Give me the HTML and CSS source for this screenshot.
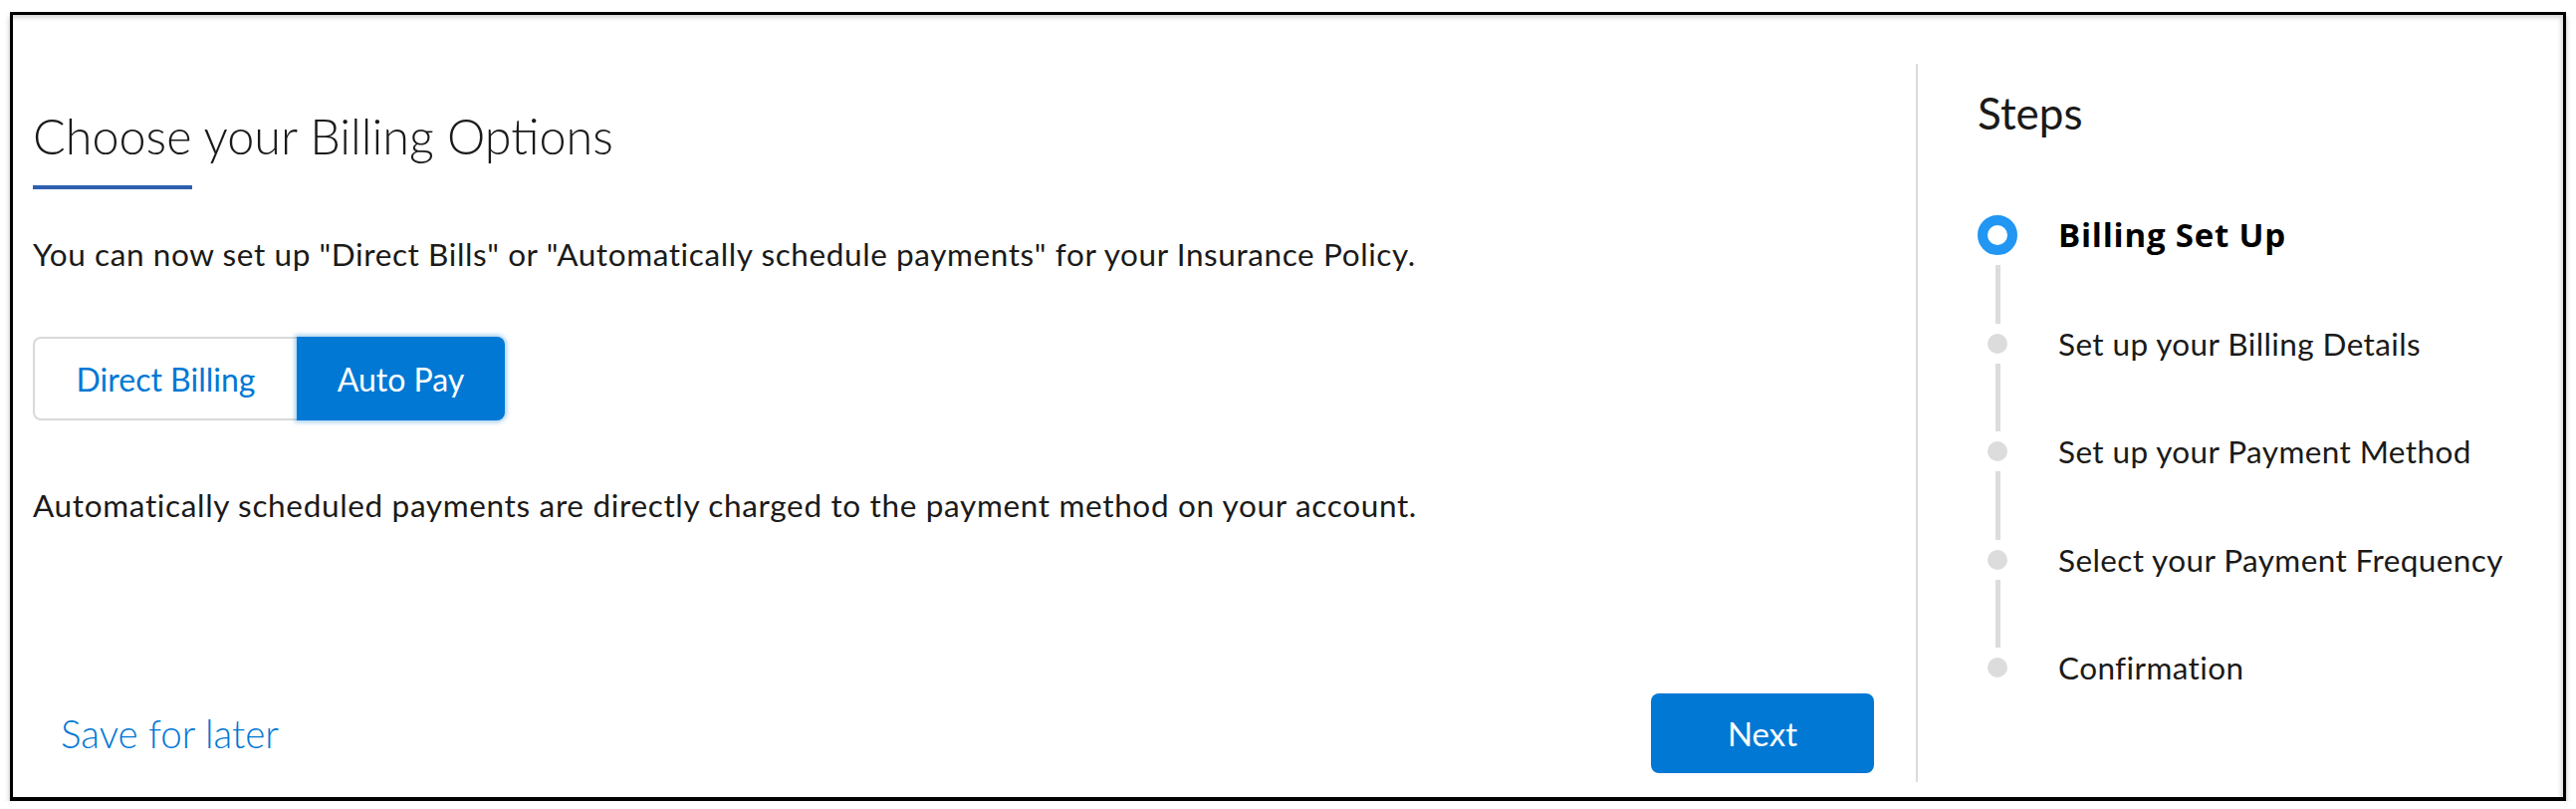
FILE: index.html
```html
<!DOCTYPE html>
<html lang="en">
<head>
<meta charset="utf-8">
<title>Billing Options</title>
<link rel="stylesheet" href="styles.css">
</head>
<body>
<div class="frame">
  <section class="main">
    <h1 class="title">Choose your Billing Options</h1>
    <div class="title-bar"></div>
    <p class="lead">You can now set up "Direct Bills" or "Automatically schedule payments" for your Insurance Policy.</p>
    <div class="toggle">
      <button class="toggle-btn direct">Direct Billing</button>
      <button class="toggle-btn auto">Auto Pay</button>
    </div>
    <p class="note">Automatically scheduled payments are directly charged to the payment method on your account.</p>
    <div class="footer">
      <a class="save" href="#">Save for later</a>
      <button class="next">Next</button>
    </div>
  </section>
  <div class="divider"></div>
  <aside class="aside">
    <h2 class="steps-title">Steps</h2>
    <div class="steps">
      <div class="step current">
        <span class="ind"><span class="ring"></span></span>
        <span class="label">Billing Set Up</span>
      </div>
      <div class="conn first"><span class="line"></span></div>
      <div class="step">
        <span class="ind"><span class="dot"></span></span>
        <span class="label">Set up your Billing Details</span>
      </div>
      <div class="conn"><span class="line"></span></div>
      <div class="step">
        <span class="ind"><span class="dot"></span></span>
        <span class="label">Set up your Payment Method</span>
      </div>
      <div class="conn"><span class="line"></span></div>
      <div class="step">
        <span class="ind"><span class="dot"></span></span>
        <span class="label">Select your Payment Frequency</span>
      </div>
      <div class="conn"><span class="line"></span></div>
      <div class="step">
        <span class="ind"><span class="dot"></span></span>
        <span class="label">Confirmation</span>
      </div>
    </div>
  </aside>
</div>
</body>
</html>
```

FILE: styles.css
```css
* { box-sizing: border-box; }
html, body { margin: 0; padding: 0; background: #fff; }
body {
  font-family: "Lato", "Open Sans", sans-serif;
  color: #1b1a19;
  padding: 12px 0 0 10px;
}
.frame {
  width: 2567px;
  height: 792px;
  border: 3px solid #000;
  border-bottom-width: 4px;
  background: #fff;
  display: flex;
  box-shadow: 0 4px 5px rgba(0,0,0,0.28), inset -3px 4px 4px -1px rgba(0,0,0,0.16);
}
.main {
  width: 1911px;
  display: flex;
  flex-direction: column;
  padding: 91px 42px 24px 20px;
}
.title {
  margin: 0;
  font-size: 48.5px;
  line-height: 60px;
  font-weight: 300;
  color: #1b1a19;
}
.title-bar {
  width: 160px;
  height: 4px;
  margin-top: 20px;
  background: #2f5fae;
}
.lead, .note {
  margin: 0;
  font-size: 31.5px;
  line-height: 40px;
  letter-spacing: 0.6px;
}
.lead { margin-top: 45px; }
.toggle {
  display: flex;
  margin-top: 63px;
  height: 84px;
}
.toggle-btn {
  font-family: inherit;
  font-size: 32px;
  height: 84px;
  padding: 0;
  cursor: pointer;
}
.direct {
  width: 265px;
  background: #fff;
  color: #0078d4;
  border: 2px solid #d9d9d9;
  border-right: none;
  border-radius: 8px 0 0 8px;
}
.auto {
  width: 209px;
  background: #0078d4;
  color: #fff;
  border: none;
  border-radius: 0 8px 8px 0;
  box-shadow: 0 0 4px 2px rgba(0,120,212,0.35);
}
.note { margin-top: 65px; letter-spacing: 0.66px; }
.footer {
  margin-top: auto;
  display: flex;
  align-items: center;
  justify-content: space-between;
}
.save {
  margin-left: 28px;
  font-size: 38.5px;
  font-weight: 300;
  line-height: 50px;
  color: #0078d4;
  text-decoration: none;
}
.next {
  width: 224px;
  height: 80px;
  border: none;
  border-radius: 8px;
  background: #0078d4;
  color: #fff;
  font-family: inherit;
  font-size: 33px;
  padding: 0;
}
.divider {
  width: 2px;
  height: 721px;
  margin-top: 49px;
  background: #dcdcdc;
  flex: none;
}
.aside {
  flex: 1;
  padding: 71px 0 0 60px;
}
.steps-title {
  margin: 0;
  font-size: 44px;
  line-height: 54px;
  font-weight: 400;
  color: #1b1a19;
}
.steps {
  margin-top: 76px;
  display: flex;
  flex-direction: column;
}
.step {
  display: flex;
  align-items: center;
  height: 40px;
}
.ind {
  width: 40px;
  height: 40px;
  display: flex;
  align-items: center;
  justify-content: center;
  flex: none;
}
.ring {
  width: 40px;
  height: 40px;
  border: 10px solid #2196f3;
  border-radius: 50%;
  background: #fff;
}
.dot {
  width: 20px;
  height: 20px;
  border-radius: 50%;
  background: #dcdcdc;
}
.label {
  margin-left: 41px;
  font-size: 31.5px;
  line-height: 40px;
  letter-spacing: 0.4px;
  color: #1b1a19;
  white-space: nowrap;
}
.current .label {
  font-family: "Open Sans", "Lato", sans-serif;
  font-weight: 700;
  font-size: 33px;
  letter-spacing: 0.8px;
  color: #000;
}
.conn {
  height: 68.5px;
  width: 40px;
  display: flex;
  justify-content: center;
}
.line {
  width: 5px;
  height: 68.5px;
  background: #dcdcdc;
}
.conn.first .line {
  margin-top: 10px;
  height: 58.5px;
}
```
